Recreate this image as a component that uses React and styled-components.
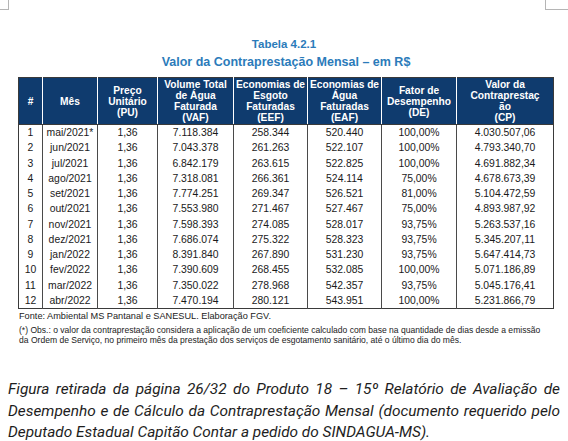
import styled, { createGlobalStyle } from "styled-components";

const GlobalStyle = createGlobalStyle`
  html, body {
    margin: 0;
    padding: 0;
    background: #ffffff;
  }
`;

const Page = styled.div`
  width: 568px;
  height: 441px;
  overflow: hidden;
  background: #ffffff;
  font-family: "Liberation Sans", Arial, sans-serif;
  color: #1c1c1c;
`;

const CropRow = styled.div`
  display: flex;
  justify-content: space-between;
  height: 10px;
`;

const CropMark = styled.div`
  width: ${(p) => p.$w}px;
  height: 9px;
  border-bottom: 1px solid #b5b5b5;
  ${(p) => (p.$side === "left" ? "border-right" : "border-left")}: 1px solid #b5b5b5;
`;

const TableTitle = styled.div`
  text-align: center;
  font-weight: bold;
  color: #2b7bba;
  font-size: ${(p) => p.$size}px;
  line-height: 14px;
  margin-top: ${(p) => p.$top}px;
  padding-left: ${(p) => p.$shift}px;
`;

const Table = styled.table`
  margin: 8px 0 0 18px;
  width: 535px;
  border-collapse: collapse;
  table-layout: fixed;
  border: 1px solid #3a3a3a;
`;

const HeadCell = styled.th`
  background: #0f3b6e;
  color: #ffffff;
  font-weight: bold;
  font-size: 10.2px;
  line-height: 11px;
  height: 46px;
  padding: 0;
  text-align: center;
  white-space: nowrap;
  overflow: hidden;
  border-left: 1px solid #ffffff;
  border-bottom: 1px solid #3a3a3a;
  &:first-child {
    border-left: none;
  }
`;

const Cell = styled.td`
  font-size: 10.4px;
  line-height: 15px;
  height: 15.25px;
  padding: 0;
  text-align: center;
  white-space: nowrap;
  color: #1a1a1a;
  border-left: 1px solid #4a4a4a;
  &:first-child {
    border-left: none;
  }
`;

const Source = styled.div`
  margin: 2px 0 0 19px;
  font-size: 9.2px;
  line-height: 11px;
  color: #222;
`;

const Note = styled.div`
  margin: 3px 0 0 19px;
  font-size: 8.55px;
  line-height: 10px;
  color: #222;
`;

const NoteLine = styled.div`
  white-space: nowrap;
`;

const Caption = styled.p`
  margin: 34px 8px 0 8px;
  font-family: Roboto, "Liberation Sans", sans-serif;
  font-style: italic;
  font-size: 15.4px;
  line-height: 21.5px;
  text-align: justify;
  color: #1e1e1e;
`;

const columns = [
  { w: 24, label: ["#"] },
  { w: 55, label: ["Mês"] },
  { w: 60, label: ["Preço", "Unitário", "(PU)"] },
  { w: 76, label: ["Volume Total", "de Água", "Faturada", "(VAF)"] },
  { w: 74, label: ["Economias de", "Esgoto", "Faturadas", "(EEF)"] },
  { w: 74, label: ["Economias de", "Água", "Faturadas", "(EAF)"] },
  { w: 75, label: ["Fator de", "Desempenho", "(DE)"] },
  { w: 97, label: ["Valor da", "Contraprestaç", "ão", "(CP)"] },
];

const rows = [
  ["1", "mai/2021*", "1,36", "7.118.384", "258.344", "520.440", "100,00%", "4.030.507,06"],
  ["2", "jun/2021", "1,36", "7.043.378", "261.263", "522.107", "100,00%", "4.793.340,70"],
  ["3", "jul/2021", "1,36", "6.842.179", "263.615", "522.825", "100,00%", "4.691.882,34"],
  ["4", "ago/2021", "1,36", "7.318.081", "266.361", "524.114", "75,00%", "4.678.673,39"],
  ["5", "set/2021", "1,36", "7.774.251", "269.347", "526.521", "81,00%", "5.104.472,59"],
  ["6", "out/2021", "1,36", "7.553.980", "271.467", "527.467", "75,00%", "4.893.987,92"],
  ["7", "nov/2021", "1,36", "7.598.393", "274.085", "528.017", "93,75%", "5.263.537,16"],
  ["8", "dez/2021", "1,36", "7.686.074", "275.322", "528.323", "93,75%", "5.345.207,11"],
  ["9", "jan/2022", "1,36", "8.391.840", "267.890", "531.230", "93,75%", "5.647.414,73"],
  ["10", "fev/2022", "1,36", "7.390.609", "268.455", "532.085", "100,00%", "5.071.186,89"],
  ["11", "mar/2022", "1,36", "7.350.022", "278.968", "542.357", "93,75%", "5.045.176,41"],
  ["12", "abr/2022", "1,36", "7.470.194", "280.121", "543.951", "100,00%", "5.231.866,79"],
];

export default function App() {
  return (
    <Page>
      <GlobalStyle />
      <CropRow>
        <CropMark $side="left" $w={8} />
        <CropMark $side="right" $w={22} />
      </CropRow>
      <TableTitle $size={11.5} $top={27} $shift={0}>
        Tabela 4.2.1
      </TableTitle>
      <TableTitle $size={12.5} $top={4} $shift={4}>
        Valor da Contraprestação Mensal – em R$
      </TableTitle>
      <Table>
        <colgroup>
          {columns.map((c, i) => (
            <col key={i} style={{ width: c.w }} />
          ))}
        </colgroup>
        <thead>
          <tr>
            {columns.map((c, i) => (
              <HeadCell key={i}>
                {c.label.map((l, j) => (
                  <div key={j}>{l}</div>
                ))}
              </HeadCell>
            ))}
          </tr>
        </thead>
        <tbody>
          {rows.map((r, i) => (
            <tr key={i}>
              {r.map((v, j) => (
                <Cell key={j}>{v}</Cell>
              ))}
            </tr>
          ))}
        </tbody>
      </Table>
      <Source>Fonte: Ambiental MS Pantanal e SANESUL. Elaboração FGV.</Source>
      <Note>
        <NoteLine>
          (*) Obs.: o valor da contraprestação considera a aplicação de um coeficiente calculado com base na quantidade de dias desde a emissão
        </NoteLine>
        <NoteLine>
          da Ordem de Serviço, no primeiro mês da prestação dos serviços de esgotamento sanitário, até o último dia do mês.
        </NoteLine>
      </Note>
      <Caption>
        Figura retirada da página 26/32 do Produto 18 – 15º Relatório de Avaliação de Desempenho e de Cálculo da
        Contraprestação Mensal (documento requerido pelo Deputado Estadual Capitão Contar a pedido do SINDAGUA-MS).
      </Caption>
    </Page>
  );
}
